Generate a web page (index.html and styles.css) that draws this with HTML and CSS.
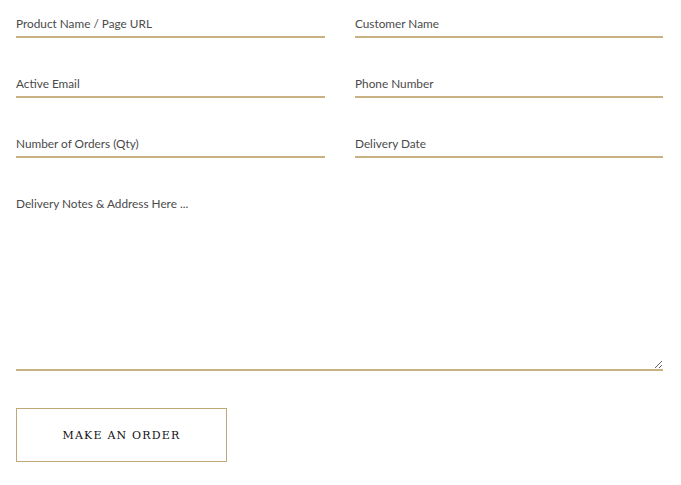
FILE: index.html
```html
<!DOCTYPE html>
<html>
<head>
<meta charset="utf-8">
<link rel="stylesheet" href="styles.css">
</head>
<body>
<form class="order-form">
  <div class="grid">
    <input class="field" type="text" placeholder="Product Name / Page URL">
    <input class="field" type="text" placeholder="Customer Name">
    <input class="field" type="email" placeholder="Active Email">
    <input class="field" type="text" placeholder="Phone Number">
    <input class="field" type="text" placeholder="Number of Orders (Qty)">
    <input class="field" type="text" placeholder="Delivery Date">
  </div>
  <textarea class="notes" placeholder="Delivery Notes &amp; Address Here ..."></textarea>
  <button class="submit" type="button">MAKE AN ORDER</button>
</form>
</body>
</html>
```
FILE: styles.css
```css
html, body {
  margin: 0;
  padding: 0;
  background: #ffffff;
}
.order-form {
  padding: 8px 18px 0 16px;
  display: flex;
  flex-direction: column;
  align-items: flex-start;
}
.grid {
  width: 647px;
  display: grid;
  grid-template-columns: 309px 308px;
  column-gap: 30px;
  row-gap: 30px;
}
.field, .notes {
  font-family: Lato, sans-serif;
  font-size: 11.8px;
  color: #4a4a4a;
  border: none;
  border-bottom: 2px solid #c8b282;
  background: transparent;
  outline: none;
  padding: 0;
  margin: 0;
  box-sizing: border-box;
}
.field {
  height: 30px;
  padding-top: 2px;
}
.field::placeholder, .notes::placeholder {
  color: #4a4a4a;
  opacity: 1;
}
.notes {
  display: block;
  width: 647px;
  height: 183px;
  margin-top: 30px;
  padding-top: 8px;
  resize: vertical;
}
.submit {
  margin-top: 37px;
  width: 211px;
  height: 54px;
  border: 1px solid #c0a878;
  background: #fff;
  font-family: "DejaVu Serif", serif;
  font-size: 11px;
  letter-spacing: 1.2px;
  color: #111;
  padding: 0;
  cursor: pointer;
}
```
